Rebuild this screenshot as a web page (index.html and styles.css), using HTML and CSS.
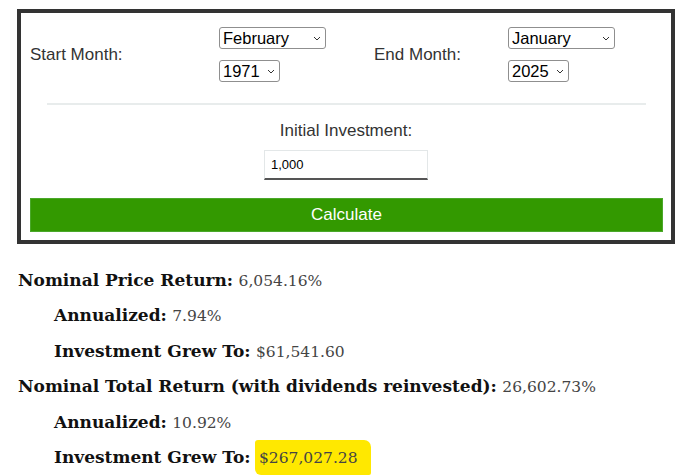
FILE: index.html
```html
<!DOCTYPE html>
<html>
<head>
    <meta charset="UTF-8">
    <meta name="viewport" content="width=device-width, initial-scale=1.0">
    <link rel="stylesheet" href="styles.css">
</head>
<body>
    <div class="calc-box">
        <div class="date-row">
            <span class="date-label">Start Month:</span>
            <div class="select-stack">
                <div class="select-wrap month">
                    <select><option>February</option></select>
                    <svg class="chevron" width="8" height="5" viewBox="0 0 8 5"><path d="M1 1 L4 4 L7 1" fill="none" stroke="#333" stroke-width="1"/></svg>
                </div>
                <div class="select-wrap year">
                    <select><option>1971</option></select>
                    <svg class="chevron" width="8" height="5" viewBox="0 0 8 5"><path d="M1 1 L4 4 L7 1" fill="none" stroke="#333" stroke-width="1"/></svg>
                </div>
            </div>
            <span class="date-label">End Month:</span>
            <div class="select-stack">
                <div class="select-wrap month">
                    <select><option>January</option></select>
                    <svg class="chevron" width="8" height="5" viewBox="0 0 8 5"><path d="M1 1 L4 4 L7 1" fill="none" stroke="#333" stroke-width="1"/></svg>
                </div>
                <div class="select-wrap year">
                    <select><option>2025</option></select>
                    <svg class="chevron" width="8" height="5" viewBox="0 0 8 5"><path d="M1 1 L4 4 L7 1" fill="none" stroke="#333" stroke-width="1"/></svg>
                </div>
            </div>
        </div>

        <hr class="divider">

        <div class="investment">
            <label class="investment-label" for="initialInvestment">Initial Investment:</label>
            <input type="text" id="initialInvestment" class="investment-input" value="1,000">
        </div>

        <button class="calc-button">Calculate</button>
    </div>

    <div class="results">
        <div class="result-line"><b>Nominal Price Return:</b> <span class="value">6,054.16%</span></div>
        <div class="result-line sub"><b>Annualized:</b> <span class="value">7.94%</span></div>
        <div class="result-line sub"><b>Investment Grew To:</b> <span class="value">$61,541.60</span></div>
        <div class="result-line"><b>Nominal Total Return (with dividends reinvested):</b> <span class="value">26,602.73%</span></div>
        <div class="result-line sub"><b>Annualized:</b> <span class="value">10.92%</span></div>
        <div class="result-line sub"><b>Investment Grew To:</b> <span class="value highlight">$267,027.28</span></div>
    </div>
</body>
</html>
```

FILE: styles.css
```css
body {
    margin: 0;
    padding: 9px 15px 0 17px;
    background: #fff;
    font-family: "Liberation Sans", Arial, sans-serif;
    color: #333;
}

.calc-box {
    width: 650px;
    border: 4px solid #333;
    padding: 14px 0 8px;
}

.date-row {
    display: grid;
    grid-template-columns: 189px 155px 134px auto;
    align-items: center;
    padding-left: 9px;
}

.date-label {
    font-size: 17px;
    color: #333;
}

.select-stack {
    display: flex;
    flex-direction: column;
    align-items: flex-start;
    gap: 11px;
}

.select-wrap {
    position: relative;
    height: 22px;
}

.select-wrap.month {
    width: 107px;
}

.select-wrap.year {
    width: 61px;
}

.select-wrap select {
    -webkit-appearance: none;
    appearance: none;
    width: 100%;
    height: 22px;
    box-sizing: border-box;
    padding: 0 0 0 3px;
    font-family: "Liberation Sans", Arial, sans-serif;
    font-size: 16.5px;
    color: #000;
    border: 1px solid #8f8f8f;
    border-radius: 3px;
    background: #fff;
}

.chevron {
    position: absolute;
    right: 5px;
    top: 9px;
    pointer-events: none;
}

.divider {
    margin: 21px 25px 0 26px;
    border: 0;
    border-top: 2px solid #e8ecec;
}

.investment {
    display: flex;
    flex-direction: column;
    align-items: center;
    padding-top: 16px;
}

.investment-label {
    font-size: 17px;
    color: #333;
}

.investment-input {
    margin-top: 9px;
    width: 164px;
    height: 30px;
    box-sizing: border-box;
    padding: 0 6px;
    font-family: "Liberation Sans", Arial, sans-serif;
    font-size: 13px;
    color: #000;
    border: 1px solid #e3e7e8;
    border-bottom: 2px solid #555;
    outline: none;
}

.calc-button {
    display: block;
    margin: 18px 8px 0 9px;
    width: 633px;
    height: 34px;
    background: #339900;
    border: 1px solid #4aa82a;
    color: #fff;
    font-family: "Liberation Sans", Arial, sans-serif;
    font-size: 17px;
    cursor: pointer;
}

/* Results */
.results {
    margin-top: 19px;
    margin-left: 1px;
    font-family: "DejaVu Serif", Georgia, serif;
    font-size: 17px;
}

.result-line {
    height: 35.4px;
    line-height: 35px;
    color: #111;
    white-space: nowrap;
}

.result-line.sub {
    padding-left: 36px;
}

.value {
    color: #444;
    font-size: 15.5px;
    line-height: 1;
}

.highlight {
    background: #ffe800;
    padding: 9px 13px 8px 4px;
    margin-left: -1px;
    border-radius: 3px 7px 2px 6px;
}
```
